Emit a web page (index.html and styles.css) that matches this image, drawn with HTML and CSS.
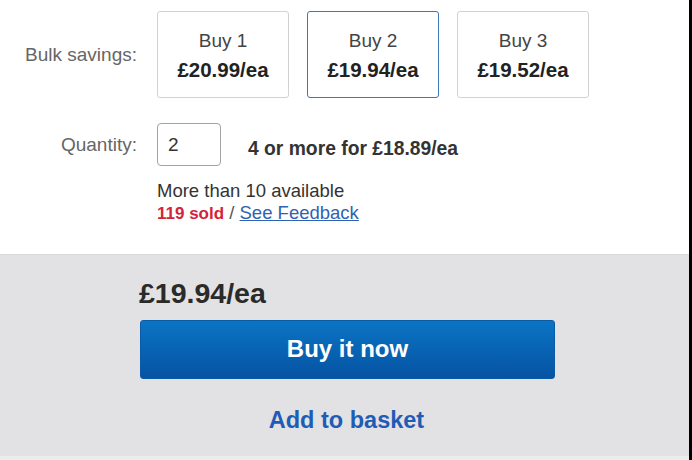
FILE: index.html
```html
<!DOCTYPE html>
<html>
<head>
<meta charset="utf-8">
<title>Buy it now</title>
<link rel="stylesheet" href="styles.css">
</head>
<body>

<div class="page">
	<div class="options">
		<div class="row">
			<div class="label">Bulk savings:</div>
			<div class="bulk">
				<div class="tier">
					<span class="tier-qty">Buy 1</span>
					<span class="tier-price">£20.99/ea</span>
				</div>
				<div class="tier selected">
					<span class="tier-qty">Buy 2</span>
					<span class="tier-price">£19.94/ea</span>
				</div>
				<div class="tier">
					<span class="tier-qty">Buy 3</span>
					<span class="tier-price">£19.52/ea</span>
				</div>
			</div>
		</div>

		<div class="row qty-row">
			<div class="label">Quantity:</div>
			<input class="qty" type="text" value="2">
			<div class="more">4 or more for £18.89/ea</div>
		</div>

		<div class="stock">
			<div>More than 10 available</div>
			<div><span class="sold">119 sold</span> <span class="sep">/</span> <a href="#" class="feedback">See Feedback</a></div>
		</div>
	</div>

	<div class="buybox">
		<div class="price">£19.94/ea</div>
		<button class="buy">Buy it now</button>
		<a href="#" class="basket">Add to basket</a>
	</div>
	<div class="foot"></div>
</div>

</body>
</html>
```

FILE: styles.css
```css
* {
	box-sizing: border-box;
}

html {
	background: #000;
}

body {
	margin: 0;
	font-family: "Liberation Sans", Arial, sans-serif;
	color: #333;
}

.page {
	width: 689px;
	height: 460px;
	background: #fff;
	display: flex;
	flex-direction: column;
}

.options {
	padding: 11px 0 29px;
}

.row {
	display: flex;
	align-items: center;
}

.label {
	width: 137px;
	margin-right: 20px;
	text-align: right;
	font-size: 19px;
	color: #666;
}

.bulk {
	display: flex;
	gap: 18px;
}

.tier {
	width: 132px;
	height: 87px;
	padding-top: 1px;
	border: 1px solid #d2d2d2;
	border-radius: 3px;
	display: flex;
	flex-direction: column;
	justify-content: center;
	align-items: center;
}

.tier.selected {
	border-color: #3c78b8;
}

.tier-qty {
	font-size: 19px;
	line-height: 29px;
	color: #444;
}

.tier-price {
	font-size: 20.5px;
	line-height: 29px;
	font-weight: bold;
	color: #222;
}

.qty-row {
	margin-top: 25px;
}

.qty {
	width: 64px;
	height: 43px;
	padding: 0 0 0 10px;
	border: 1px solid #a3a3a3;
	border-radius: 4px;
	font-family: inherit;
	font-size: 19px;
	color: #333;
}

.more {
	margin-left: 27px;
	padding-top: 8px;
	font-size: 19.3px;
	font-weight: bold;
	color: #333;
}

.stock {
	margin: 14px 0 0 157px;
	font-size: 18.5px;
	line-height: 22px;
	color: #333;
}

.sold {
	font-size: 17px;
	font-weight: bold;
	color: #d42339;
}

.sep {
	color: #555;
}

.feedback {
	color: #2f62b3;
	text-decoration: underline;
}

.buybox {
	flex: 1;
	padding: 22px 0 0 139px;
	background: #e2e1e3;
	border-top: 1px solid #dadada;
}

.price {
	font-size: 28.5px;
	line-height: 32px;
	font-weight: bold;
	color: #2a2a2a;
}

.buy {
	display: block;
	width: 415px;
	height: 59px;
	margin: 11px 0 0 1px;
	padding-bottom: 3px;
	border: 1px solid #0a5aa5;
	border-radius: 3px;
	background: linear-gradient(#0b74c4, #0653a3);
	color: #fff;
	font-family: inherit;
	font-size: 24px;
	font-weight: bold;
}

.basket {
	display: block;
	width: 415px;
	margin-top: 27px;
	text-align: center;
	font-size: 23.5px;
	line-height: 28px;
	font-weight: bold;
	color: #1f5cb5;
	text-decoration: none;
}

.foot {
	height: 4px;
	background: #ececec;
}
```
